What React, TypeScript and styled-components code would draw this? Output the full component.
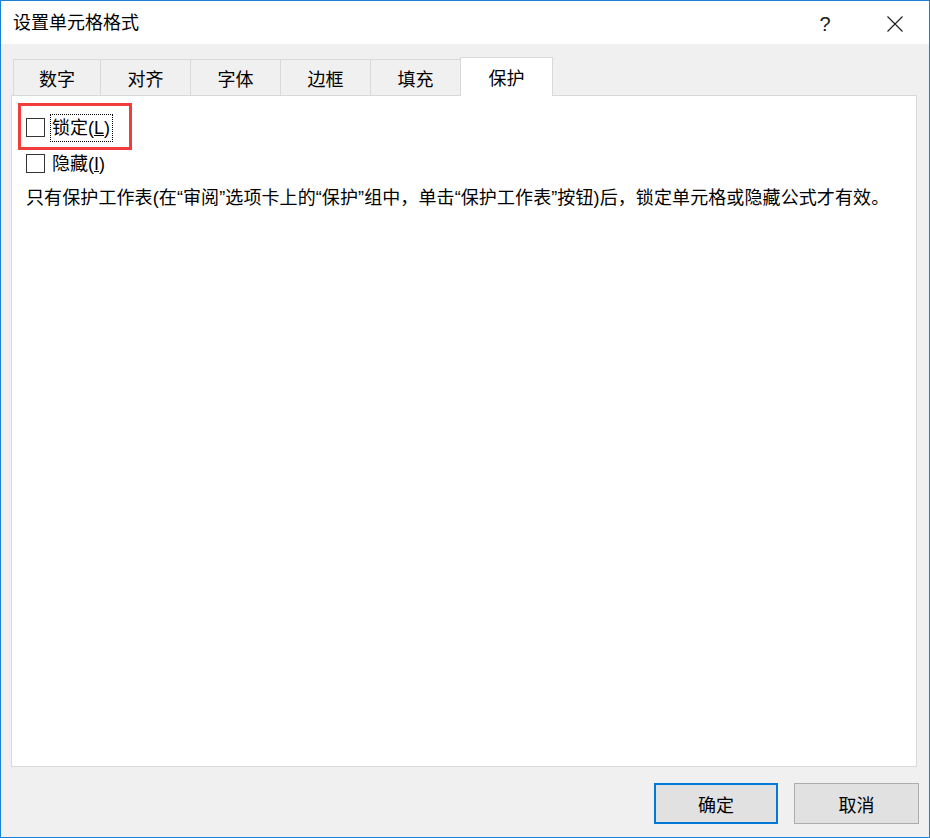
import React from "react";
import styled, { createGlobalStyle } from "styled-components";

const GlobalStyle = createGlobalStyle`
  html, body { margin: 0; padding: 0; background: #ffffff; }
  * { box-sizing: border-box; }
  body {
    font-family: "Liberation Sans", "Noto Sans CJK SC", sans-serif;
    font-size: 18px;
    color: #000;
  }
`;

const Window = styled.div`
  width: 930px;
  height: 838px;
  border: 1px solid #1a80d6;
  background: #f0f0f0;
  display: flex;
  flex-direction: column;
`;

const TitleBar = styled.div`
  height: 43px;
  background: #ffffff;
  display: flex;
  align-items: center;
  padding-left: 12px;
`;

const Title = styled.div`
  flex: 1;
  font-size: 18px;
  line-height: 24px;
  padding-top: 1px;
`;

const HelpGlyph = styled.div`
  width: 20px;
  font-size: 20px;
  line-height: 24px;
  color: #1a1a1a;
  text-align: center;
  margin-right: 52px;
  padding-top: 2px;
`;

const CloseGlyph = styled.div`
  width: 16px;
  height: 16px;
  margin-right: 26px;
  margin-top: 2px;
  display: flex;
`;

const Body = styled.div`
  flex: 1;
  display: flex;
  flex-direction: column;
  padding: 13px 12px 0 10px;
`;

const TabStrip = styled.div`
  height: 38px;
  display: flex;
  align-items: flex-end;
  padding-left: 2px;
`;

const Tab = styled.div<{ $w: number; $active?: boolean }>`
  width: ${(p) => p.$w}px;
  height: ${(p) => (p.$active ? 39 : 36)}px;
  margin-bottom: ${(p) => (p.$active ? -1 : 0)}px;
  margin-left: -1px;
  &:first-child { margin-left: 0; }
  border: 1px solid #d9d9d9;
  border-bottom: none;
  background: ${(p) => (p.$active ? "#ffffff" : "#f0f0f0")};
  position: relative;
  z-index: ${(p) => (p.$active ? 2 : 1)};
  display: flex;
  align-items: center;
  justify-content: center;
  font-size: 18px;
  padding-bottom: ${(p) => (p.$active ? 1 : 0)}px;
`;

const Panel = styled.div`
  height: 672px;
  background: #ffffff;
  border: 1px solid #d9d9d9;
  position: relative;
  padding: 22px 14px;
  display: flex;
  flex-direction: column;
`;

const CheckRow = styled.div`
  display: flex;
  align-items: center;
  height: 19px;
  margin-bottom: 17px;
`;

const Box = styled.span`
  width: 19px;
  height: 19px;
  border: 1px solid #333333;
  background: #ffffff;
  flex: none;
`;

const Label = styled.span<{ $focus?: boolean }>`
  margin-left: 5px;
  height: 28px;
  padding: 0 2px 0 1px;
  border: 1px ${(p) => (p.$focus ? "dotted #000" : "solid transparent")};
  display: flex;
  align-items: center;
  font-size: 18px;
  line-height: 24px;
  white-space: nowrap;
`;

const Note = styled.div`
  font-size: 18px;
  line-height: 24px;
  margin-top: -4px;
  letter-spacing: 0.1px;
  white-space: nowrap;
`;

const Highlight = styled.div`
  position: absolute;
  left: 6px;
  top: 7px;
  width: 114px;
  height: 47px;
  border: 3px solid #f23b3b;
  pointer-events: none;
`;

const Footer = styled.div`
  display: flex;
  justify-content: flex-end;
  gap: 16px;
  padding: 16px 0 13px 0;
  margin-right: -2px;
`;

const Button = styled.button<{ $primary?: boolean }>`
  width: ${(p) => (p.$primary ? 124 : 125)}px;
  height: 41px;
  background: #e1e1e1;
  border: ${(p) => (p.$primary ? "2px solid #0078d7" : "1px solid #adadad")};
  font-family: "Liberation Sans", "Noto Sans CJK SC", sans-serif;
  font-size: 18px;
  color: #000;
  padding: 0;
  display: flex;
  align-items: center;
  justify-content: center;
`;

const tabs: { label: string; w: number }[] = [
  { label: "数字", w: 88 },
  { label: "对齐", w: 91 },
  { label: "字体", w: 91 },
  { label: "边框", w: 91 },
  { label: "填充", w: 91 },
  { label: "保护", w: 93 },
];

export default function App() {
  return (
    <>
      <GlobalStyle />
      <Window>
        <TitleBar>
          <Title>设置单元格格式</Title>
          <HelpGlyph>?</HelpGlyph>
          <CloseGlyph>
            <svg width="16" height="16" viewBox="0 0 16 16">
              <path d="M0.5 0.5 L15.5 15.5 M15.5 0.5 L0.5 15.5" stroke="#1a1a1a" strokeWidth="1.1" fill="none" />
            </svg>
          </CloseGlyph>
        </TitleBar>
        <Body>
          <TabStrip>
            {tabs.map((t) => (
              <Tab key={t.label} $w={t.w} $active={t.label === "保护"}>
                {t.label}
              </Tab>
            ))}
          </TabStrip>
          <Panel>
            <Highlight />
            <CheckRow>
              <Box />
              <Label $focus>锁定(<u>L</u>)</Label>
            </CheckRow>
            <CheckRow>
              <Box />
              <Label>隐藏(<u>I</u>)</Label>
            </CheckRow>
            <Note>
              只有保护工作表(在“审阅”选项卡上的“保护”组中，单击“保护工作表”按钮)后，锁定单元格或隐藏公式才有效。
            </Note>
          </Panel>
          <Footer>
            <Button $primary>确定</Button>
            <Button>取消</Button>
          </Footer>
        </Body>
      </Window>
    </>
  );
}
